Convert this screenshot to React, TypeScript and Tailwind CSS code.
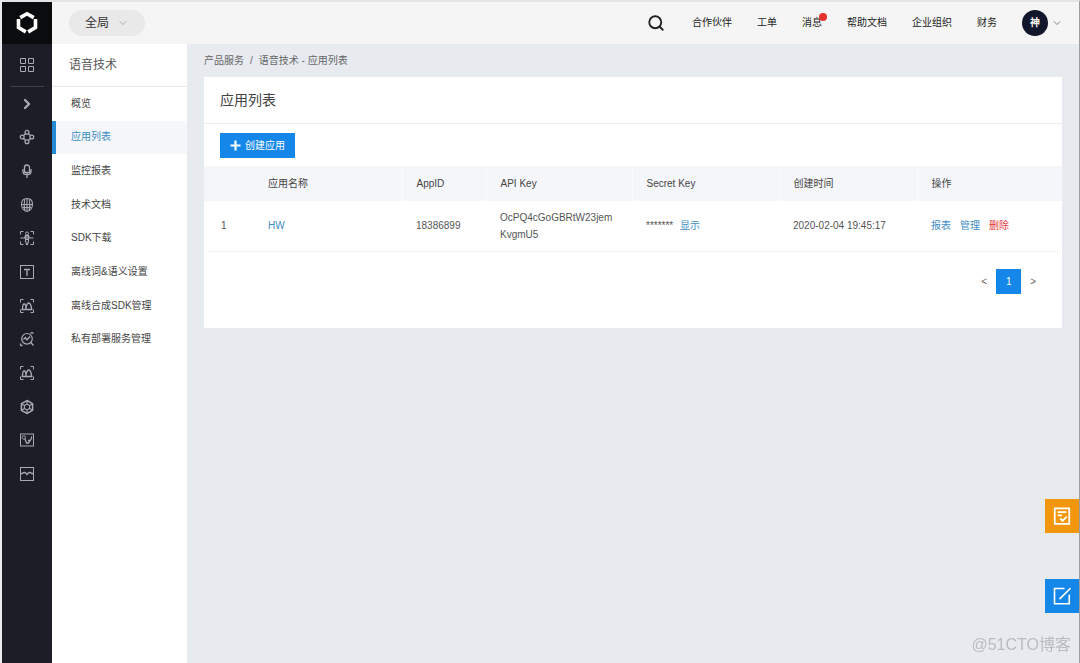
import React from "react";
import { Search, ChevronDown, ChevronRight } from "lucide-react";

type IconProps = { children: React.ReactNode; className?: string };

function Glyph({ children, className = "size-4" }: IconProps) {
  return (
    <svg viewBox="0 0 16 16" className={className} fill="none" stroke="currentColor" strokeWidth="1" aria-hidden="true">
      {children}
    </svg>
  );
}

const corners = <path d="M1.500 4.500v-3h3M11.500 1.500h3v3M14.500 11.500v3h-3M4.500 14.500h-3v-3" />;

const peaks = (
  <Glyph>
    {corners}
    <path
      d="M2.500 11.500h11M3.500 11C3.500 8.500 4 6 5.200 6S7 8.500 7 11M7 10c.5-3 1.500-5 2.800-5s2.700 3 2.700 6"
      strokeWidth="1.300"
    />
  </Glyph>
);

const services: { name: string; icon: React.ReactNode }[] = [
  { name: "展开", icon: <ChevronRight className="size-4" strokeWidth={3.5} /> },
  {
    name: "知识图谱",
    icon: (
      <Glyph>
        <g strokeWidth="1.300">
          <circle cx="8" cy="3.200" r="1.900" />
          <circle cx="8" cy="12.800" r="1.900" />
          <circle cx="3.200" cy="8" r="1.900" />
          <circle cx="12.800" cy="8" r="1.900" />
          <path d="M6.500 4.600 4.600 6.500M9.500 4.600l1.900 1.900M6.500 11.400 4.600 9.500M9.500 11.400l1.900-1.900" />
        </g>
      </Glyph>
    ),
  },
  {
    name: "语音技术",
    icon: (
      <Glyph>
        <g strokeWidth="1.300">
          <path d="M5.500 9.500V4.500a2.500 2.500 0 0 1 5 0v5Z" />
          <path d="M4 6v2.500c0 2 1.700 3.200 4 3.200s4-1.200 4-3.200V6M8 10v5" />
        </g>
      </Glyph>
    ),
  },
  {
    name: "人脸识别",
    icon: (
      <Glyph>
        <path
          d="M8 1.500c3.500 0 5.500 2 5.500 5.500 0 4-2.500 7.500-5.500 7.500S2.500 11 2.500 7c0-3.500 2-5.500 5.500-5.500ZM8 1.500v13M2.500 7.500h11M5.500 2.500C5 6 5 10 6 14M10.500 2.500c.5 3.500.5 7.500-.5 11.500M4 10.500h8"
          strokeWidth="1.100"
        />
      </Glyph>
    ),
  },
  {
    name: "人体分析",
    icon: (
      <Glyph>
        {corners}
        <circle cx="8" cy="3.500" r="1.500" />
        <path d="M1.500 8h4l1-2.500h3l1 2.500h4M6.500 6v5l1 3.500h1l1-3.500V6M6.500 9.500h3M8 6v3" strokeWidth="1.100" />
      </Glyph>
    ),
  },
  {
    name: "文字识别",
    icon: (
      <Glyph>
        <rect x="1.500" y="1.500" width="13" height="13" />
        <path d="M5 5.500h6M8 5.500V12" strokeWidth="1.300" />
      </Glyph>
    ),
  },
  { name: "图像识别", icon: peaks },
  {
    name: "图像搜索",
    icon: (
      <Glyph>
        <circle cx="8" cy="7.800" r="5.300" strokeWidth="1.200" />
        <path d="M11.800 11.500 14.500 14.500M1.500 14.500h2M1.500 14.500v-2M11.500 2h3M4.500 8.500 6.500 6.500 8 9l3-3.500" strokeWidth="1.300" />
      </Glyph>
    ),
  },
  { name: "图像审核", icon: peaks },
  {
    name: "智能创作",
    icon: (
      <Glyph>
        <path d="m8 1.500 5.600 3.200v6.600L8 14.500l-5.600-3.200V4.700Z" strokeWidth="1.500" />
        <path
          d="m8 5 2.600 1.500v3L8 11 5.400 9.500v-3ZM8 1.500V5M2.400 4.700l3 1.800M13.600 4.700l-3 1.800M5.400 9.500l-3 1.800M10.600 9.500l3 1.800M8 11v3.500"
          strokeWidth="1.100"
        />
      </Glyph>
    ),
  },
  {
    name: "自然语言",
    icon: (
      <Glyph>
        <rect x="1.500" y="2" width="13" height="12" />
        <circle cx="4.800" cy="5.500" r="1.700" />
        <path d="m6 7 1.500 4h2l3-4.500M9 8.500h2M12.500 4.500v2" strokeWidth="1.300" />
      </Glyph>
    ),
  },
  {
    name: "增强现实",
    icon: (
      <Glyph>
        <rect x="1.500" y="1.500" width="13" height="13" />
        <path d="M1.500 7.500h2c1-1.500 3-1.500 4.500 1 1.500-2.500 3.500-2.500 4.500-1h2" strokeWidth="1.300" />
      </Glyph>
    ),
  },
];

const menu = ["概览", "应用列表", "监控报表", "技术文档", "SDK下载", "离线词&语义设置", "离线合成SDK管理", "私有部署服务管理"];

const headings = ["", "应用名称", "AppID", "API Key", "Secret Key", "创建时间", "操作"];

function Rail() {
  return (
    <nav aria-label="产品" className="w-[50px] shrink-0 bg-[#1d1d28] text-[#a9abb4]">
      <a href="#home" aria-label="首页" className="flex h-[42px] items-center justify-center bg-[#0b0c0e] text-white">
        <svg viewBox="0 0 24 24" className="size-6" fill="none" stroke="currentColor" strokeWidth="3.600" aria-hidden="true">
          <path d="M3.500 8v8.500l7.300 4.400M5.200 6.600 12 2.800l6.800 3.800M20.500 8v8.500l-7.300 4.400" />
        </svg>
      </a>
      <div className="flex h-[42px] items-center justify-center">
        <a href="#all" aria-label="全部产品">
          <Glyph>
            <path d="M1.500 1.500h5v5h-5ZM9.500 1.500h5v5h-5ZM1.500 9.500h5v5h-5ZM9.500 9.500h5v5h-5Z" />
          </Glyph>
        </a>
      </div>
      <div className="mx-2 h-px bg-[#41414c]" />
      <ul className="grid h-[404px] auto-rows-fr">
        {services.map((s) => (
          <li key={s.name} className="flex items-center justify-center">
            <a href="#service" aria-label={s.name}>{s.icon}</a>
          </li>
        ))}
      </ul>
    </nav>
  );
}

function TopBar() {
  return (
    <header className="flex h-[42px] shrink-0 items-center bg-[#f5f5f5] pr-4 pl-[17px]">
      <button className="flex h-[26px] w-[76px] items-center justify-center gap-2 rounded-full bg-[#e9e9e9] text-[12px] text-[#333]">
        全局
        <ChevronDown className="size-3 text-[#aaa]" />
      </button>
      <nav aria-label="账户" className="ml-auto flex items-center gap-[25px] text-[#222]">
        <button aria-label="搜索" className="mr-[2px]">
          <Search className="size-[18px]" strokeWidth={2.5} />
        </button>
        <a href="#partner">合作伙伴</a>
        <a href="#ticket">工单</a>
        <a href="#message" className="relative">
          消息
          <span className="absolute -top-[2px] -right-[5px] size-2 rounded-full bg-[#e2332d]" />
        </a>
        <a href="#help">帮助文档</a>
        <a href="#org">企业组织</a>
        <a href="#finance">财务</a>
        <button className="flex items-center gap-[3px]">
          <span className="flex size-[26px] items-center justify-center rounded-full bg-[#12162a] font-bold text-white">神</span>
          <ChevronDown className="size-3 text-[#888]" />
        </button>
      </nav>
    </header>
  );
}

function SideMenu() {
  return (
    <aside className="w-[135px] shrink-0 bg-white">
      <h2 className="flex h-[43px] items-center border-b border-[#e8e8ea] pl-[17px] text-[12px] text-[#555]">语音技术</h2>
      <ul className="grid h-[269px] auto-rows-fr">
        {menu.map((item) => (
          <li key={item} className="flex">
            <a
              href="#menu"
              className={
                item === "应用列表"
                  ? "flex grow items-center border-l-4 border-[#2389d3] bg-[#f5f7fb] pl-[15px] text-[#3c8dc4]"
                  : "flex grow items-center pl-[19px]"
              }
            >
              {item}
            </a>
          </li>
        ))}
      </ul>
    </aside>
  );
}

function AppTable() {
  return (
    <table className="w-full table-fixed border-collapse text-left">
      <colgroup>
        <col className="w-[50px]" />
        <col className="w-[148px]" />
        <col className="w-[84px]" />
        <col className="w-[146px]" />
        <col className="w-[147px]" />
        <col className="w-[138px]" />
        <col className="w-[145px]" />
      </colgroup>
      <thead>
        <tr className="h-[35px] bg-[#f5f6fa]">
          {headings.map((h, i) => (
            <th key={i} scope="col" className={i > 1 ? "border-l border-[#fafbfd] px-[14px] font-normal" : "px-[14px] font-normal"}>
              {h}
            </th>
          ))}
        </tr>
      </thead>
      <tbody>
        <tr className="h-[50px] text-[#555]">
          <td className="pl-[17px]">1</td>
          <td className="px-[14px]"><a href="#app" className="text-[#3c8dc4]">HW</a></td>
          <td className="px-[14px]">18386899</td>
          <td className="px-[14px] leading-[17px] break-all">OcPQ4cGoGBRtW23jemKvgmU5</td>
          <td className="px-[14px]">******* <button className="ml-1 text-[#3c8dc4]">显示</button></td>
          <td className="px-[14px] whitespace-nowrap">2020-02-04 19:45:17</td>
          <td className="px-[14px]">
            <div className="flex gap-[9px] whitespace-nowrap">
              <a href="#report" className="text-[#3c8dc4]">报表</a>
              <a href="#manage" className="text-[#3c8dc4]">管理</a>
              <button className="text-[#e8393c]">删除</button>
            </div>
          </td>
        </tr>
      </tbody>
    </table>
  );
}

export default function App() {
  return (
    <div className="flex min-h-screen border-t-2 border-r border-l-2 border-t-[#e3e4e6] border-r-[#9a9ea3] border-l-[#e9eaec] bg-[#e7eaef] font-['Liberation_Sans','Noto_Sans_CJK_SC',sans-serif] text-[10px] leading-4 text-[#444]">
      <Rail />
      <div className="flex min-w-0 grow flex-col">
        <TopBar />
        <div className="flex grow">
          <SideMenu />
          <main className="min-w-0 grow px-[17px]">
            <p className="flex h-[33px] items-center gap-[6px] text-[#666]">
              <a href="#products">产品服务</a>
              <span>/</span>
              <span>语音技术 - 应用列表</span>
            </p>
            <section className="bg-white pb-[34px]">
              <h1 className="flex h-[47px] items-center border-b border-[#ebecef] pl-4 text-[14px]">应用列表</h1>
              <div className="px-4 pt-[9px] pb-2">
                <button className="flex h-[25px] items-center gap-1 bg-[#1487e8] px-[10px] text-white">
                  <svg viewBox="0 0 11 11" className="size-[11px]" stroke="currentColor" strokeWidth="2.200" aria-hidden="true">
                    <path d="M5.500 .5v10M.5 5.500h10" />
                  </svg>
                  创建应用
                </button>
              </div>
              <AppTable />
              <div className="mx-1 h-px bg-[#eceef0]" />
              <nav aria-label="分页" className="mt-[17px] flex items-center justify-end gap-[9px] pr-[26px] text-[#666]">
                <button aria-label="上一页">&lt;</button>
                <button className="size-[25px] bg-[#1487e8] text-white">1</button>
                <button aria-label="下一页">&gt;</button>
              </nav>
            </section>
          </main>
        </div>
      </div>
      <div className="fixed right-px bottom-[50px] flex flex-col gap-[46px] text-white">
        <button aria-label="问卷" className="flex size-[34px] items-center justify-center bg-[#f2960d]">
          <Glyph className="size-5">
            <path d="M2.200 1.800h11.600v12.400H2.200ZM4.500 4.800h7M4.500 7.500h3.500M6.500 10l2 1.800L11.800 8.500" strokeWidth="1.400" />
          </Glyph>
        </button>
        <button aria-label="反馈" className="flex size-[34px] items-center justify-center bg-[#1487e8]">
          <Glyph className="size-5">
            <path d="M10 2H2v12.200h11.800V7M6 10.500 14.800 1.800" strokeWidth="1.300" />
          </Glyph>
        </button>
      </div>
      <span className="fixed right-[9px] bottom-[6px] text-[16px] leading-6 text-[#b9bcc0]">@51CTO博客</span>
    </div>
  );
}
